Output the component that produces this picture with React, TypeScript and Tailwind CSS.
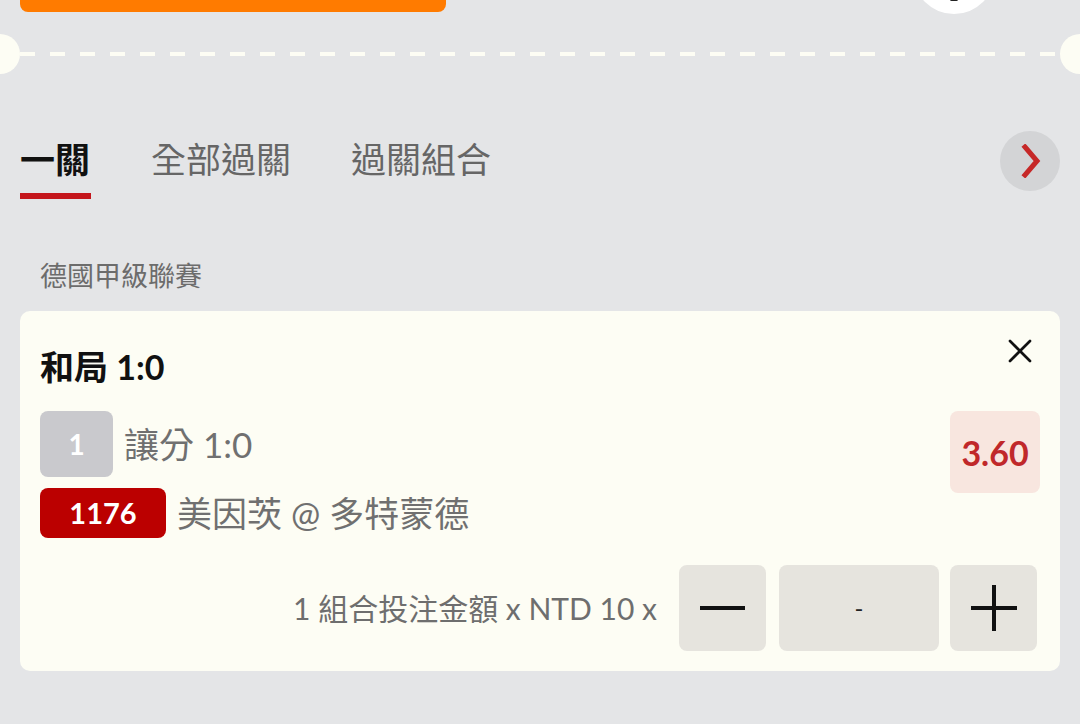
import { X } from 'lucide-react';

const tabs = ['一關', '全部過關', '過關組合'];

export default function App() {
  return (
    <div
      className="relative w-[1080px] h-[724px] overflow-hidden bg-[#e4e5e7]"
      style={{ fontFamily: 'Lato, "Noto Sans CJK TC", sans-serif' }}
    >
      {/* Top bar */}
      <div className="flex items-start justify-between">
        <div className="ml-[20px] w-[426px] h-[12px] rounded-b-[8px] bg-[#ff7b00]" />
        <div className="relative mt-[-68px] mr-[85px] w-[82px] h-[82px] rounded-full bg-white">
          <div className="absolute left-[37px] top-[66px] w-[8px] h-[3px] rounded-sm bg-[#222]" />
        </div>
      </div>

      {/* Ticket divider */}
      <div className="mt-[20px] flex items-center h-[40px]">
        <div className="w-[20px] h-[40px] rounded-r-full bg-[#fdfdf4]" />
        <div className="flex-1 h-[4px] bg-[repeating-linear-gradient(90deg,#fdfdf4_0_15px,transparent_15px_30px)]" />
        <div className="w-[20px] h-[40px] rounded-l-full bg-[#fdfdf4]" />
      </div>

      {/* Tabs */}
      <div className="mt-[57px] flex items-start justify-between px-[20px]">
        <div className="flex gap-[60px] pt-[8px]">
          {tabs.map((t, i) => (
            <div key={t} className="flex flex-col">
              <span
                className={`text-[35px] leading-[40px] ${
                  i === 0 ? 'font-bold text-[#111]' : 'text-[#666]'
                }`}
              >
                {t}
              </span>
              {i === 0 && <div className="mt-[14px] w-[71px] h-[6px] bg-[#c4161c]" />}
            </div>
          ))}
        </div>
        <button className="flex items-center justify-center w-[60px] h-[60px] rounded-full bg-[#d3d4d6]">
          <svg width="26" height="34" viewBox="0 0 26 34" fill="none">
            <path d="M8 3 L20 17 L8 31" stroke="#c62828" strokeWidth="5" strokeLinecap="square" />
          </svg>
        </button>
      </div>

      {/* League */}
      <div className="mt-[60px] px-[40px] text-[27px] leading-[34px] text-[#6c6c6c]">德國甲級聯賽</div>

      {/* Bet card */}
      <div className="mx-[20px] mt-[18px] rounded-[10px] bg-[#fdfdf4] pl-[20px] pr-[20px] pt-[20px] pb-[20px]">
        <div className="flex items-start justify-between">
          <div className="mt-[16px] text-[34px] leading-[40px] font-bold text-[#111]">和局 1:0</div>
          <X className="w-[40px] h-[40px] text-[#111]" strokeWidth={1.6} />
        </div>

        <div className="mt-[24px] flex items-start justify-between">
          <div className="flex flex-col gap-[11px]">
            <div className="flex items-center gap-[11px]">
              <div className="flex items-center justify-center w-[73px] h-[66px] rounded-[8px] bg-[#c9c9cd] text-[28px] font-bold text-white">
                1
              </div>
              <span className="text-[35px] leading-[40px] text-[#707070]">讓分 1:0</span>
            </div>
            <div className="flex items-center gap-[11px]">
              <div className="flex items-center justify-center w-[126px] h-[50px] rounded-[8px] bg-[#bb0000] text-[29px] font-bold text-white">
                1176
              </div>
              <span className="text-[35px] leading-[40px] text-[#707070]">美因茨 @ 多特蒙德</span>
            </div>
          </div>
          <div className="flex items-center justify-center w-[90px] h-[82px] rounded-[8px] bg-[#f8e6df] text-[34px] font-bold text-[#c0282a]">
            3.60
          </div>
        </div>

        <div className="mt-[27px] flex items-center justify-end pr-[3px]">
          <span className="mr-[22px] text-[30px] leading-[36px] text-[#6e6e6e]">1 組合投注金額 x NTD 10 x</span>
          <button className="flex items-center justify-center w-[87px] h-[86px] rounded-[8px] bg-[#e6e4de]">
            <div className="w-[45px] h-[4px] bg-[#111]" />
          </button>
          <div className="ml-[13px] flex items-center justify-center w-[160px] h-[86px] rounded-[8px] bg-[#e6e4de] text-[24px] text-[#222]">
            -
          </div>
          <button className="ml-[11px] flex items-center justify-center w-[87px] h-[86px] rounded-[8px] bg-[#e6e4de]">
            <svg width="46" height="46" viewBox="0 0 46 46">
              <path d="M0 23 H46 M23 0 V46" stroke="#111" strokeWidth="4" />
            </svg>
          </button>
        </div>
      </div>
    </div>
  );
}
